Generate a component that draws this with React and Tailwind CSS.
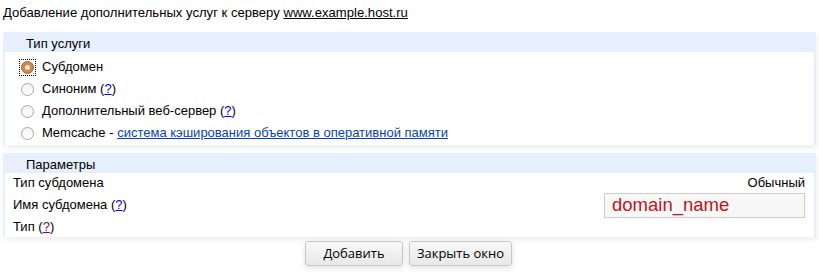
import React, { useState } from 'react';

const Help = ({ visited }) => (
  <>
    (<a href="#" className={`underline ${visited ? 'text-[#800080]' : 'text-[#0000ee]'}`}>?</a>)
  </>
);

const Radio = ({ checked, focused }) => (
  <span className={`flex w-[15px] h-[15px] items-center justify-center ${focused ? 'outline-1 outline-dotted outline-black' : ''}`}>
    {checked ? (
      <span className="block w-[13px] h-[13px] rounded-full bg-[#d0894a] border border-[#9a6a3c] flex items-center justify-center">
        <span className="block w-[5px] h-[5px] rounded-full bg-[#f4e6d8]" />
      </span>
    ) : (
      <span className="block w-[13px] h-[13px] rounded-full border border-[#a8a8a8] bg-gradient-to-b from-[#f2f2f2] to-[#ffffff]" />
    )}
  </span>
);

const Panel = ({ title, children }) => (
  <div className="mx-[3px] border-x-2 border-[#e5f0fc] bg-white shadow-[1px_3px_6px_rgba(0,0,0,0.07)]">
    <div className="h-[20px] bg-[#e5f0fc] pl-[21px] flex items-end pb-px text-[13px] leading-[15px]">
      {title}
    </div>
    {children}
  </div>
);

export default function App() {
  const [service, setService] = useState('sub');

  const services = [
    { id: 'sub', label: <>Субдомен</> },
    { id: 'syn', label: <>Синоним <Help /></> },
    { id: 'web', label: <>Дополнительный веб-сервер <Help /></> },
    {
      id: 'mem',
      label: (
        <>
          Memcache - <a href="#" className="text-[#0645ad] underline">система кэширования объектов в оперативной памяти</a>
        </>
      ),
    },
  ];

  return (
    <div className="w-[819px] h-[276px] bg-white text-black font-['Liberation_Sans',Arial,sans-serif] text-[13px]">
      <div className="pl-[3px] pt-[5px] h-[32px] leading-[16px] text-[13.1px]">
        Добавление дополнительных услуг к серверу <a href="#" className="underline text-black">www.example.host.ru</a>
      </div>

      <Panel title="Тип услуги">
        <div className="pt-[4px] pb-px">
          {services.map((s) => (
            <label key={s.id} className="flex items-center h-[22px] pl-[15px] cursor-pointer" onClick={() => setService(s.id)}>
              <Radio checked={service === s.id} focused={service === s.id} />
              <span className="ml-[7px]">{s.label}</span>
            </label>
          ))}
        </div>
      </Panel>

      <div className="h-[8px]" />

      <Panel title="Параметры">
        <div className="pl-[8px] pr-[9px]">
          <div className="flex items-center justify-between h-[20px]">
            <span>Тип субдомена</span>
            <span>Обычный</span>
          </div>
          <div className="flex items-center justify-between h-[24px]">
            <span>Имя субдомена <Help /></span>
            <div className="w-[201px] h-[25px] border border-[#cccccc] bg-[#f7f7f7] pl-[7px] flex items-center text-[18.5px] text-[#c0121c] leading-none">
              domain_name
            </div>
          </div>
          <div className="flex items-center h-[20px]">
            <span>Тип <Help visited /></span>
          </div>
        </div>
      </Panel>

      <div className="flex justify-center gap-[6px] mt-[4px] pr-[2px] font-['Open_Sans',sans-serif] text-[13px]">
        <button className="w-[98px] h-[25px] rounded-[3px] border border-[#c8c8c8] bg-gradient-to-b from-[#f8f8f8] to-[#e8e8e8] shadow-[0_2px_6px_rgba(0,0,0,0.12)]">
          Добавить
        </button>
        <button className="w-[103px] h-[25px] rounded-[3px] border border-[#c8c8c8] bg-gradient-to-b from-[#f8f8f8] to-[#e8e8e8] shadow-[0_2px_6px_rgba(0,0,0,0.12)]">
          Закрыть окно
        </button>
      </div>
    </div>
  );
}
